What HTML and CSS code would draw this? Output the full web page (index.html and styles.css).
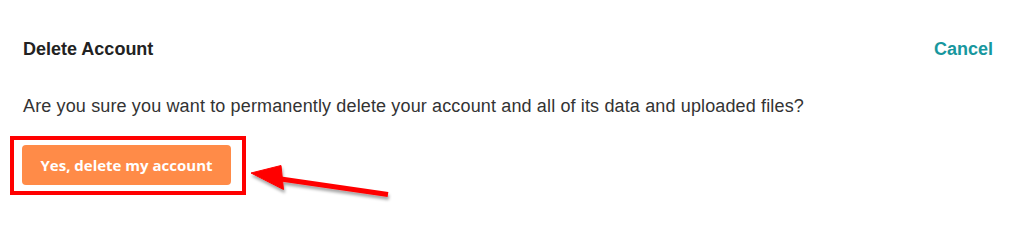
FILE: index.html
```html
<!DOCTYPE html>
<html lang="en">
<head>
  <meta charset="UTF-8" />
  <meta name="viewport" content="width=device-width, initial-scale=1.0"/>
  <title>Delete Account</title>
  <link rel="stylesheet" href="styles.css">
</head>
<body>

  <div class="panel">
    <div class="panel-head">
      <h2>Delete Account</h2>
      <a class="cancel">Cancel</a>
    </div>

    <p class="message">Are you sure you want to permanently delete your account and all of its data and uploaded files?</p>

    <!-- zvýrazněné tlačítko -->
    <div class="highlight">
      <button type="button" class="danger">Yes, delete my account</button>
    </div>
  </div>

  <!-- šipka přes obsah -->
  <svg class="arrow" width="160" height="50" viewBox="245 158 160 50">
    <defs>
      <filter id="shadow" x="-20%" y="-40%" width="140%" height="200%">
        <feDropShadow dx="1" dy="3" stdDeviation="1.5" flood-color="#000" flood-opacity="0.35"/>
      </filter>
    </defs>
    <g filter="url(#shadow)" fill="#ff0000" stroke="#ff0000">
      <line x1="274" y1="178" x2="388" y2="194.5" stroke-width="5"/>
      <polygon points="251,173 281,165.5 283.5,189.5" stroke-width="1" stroke-linejoin="round"/>
    </g>
  </svg>

</body>
</html>
```

FILE: styles.css
```css
* {
  margin: 0;
  padding: 0;
  box-sizing: border-box;
}
html, body {
  height: 100%;
  overflow: hidden;
}
body {
  background: #fff;
  font-family: 'Liberation Sans', Arial, sans-serif;
  color: #333;
  position: relative;
}

.panel {
  padding: 38px 25px 0 23px;
}

.panel-head {
  display: flex;
  justify-content: space-between;
  align-items: baseline;
}
.panel-head h2 {
  font-size: 18px;
  line-height: 22px;
  font-weight: bold;
  color: #222;
}
.cancel {
  font-size: 18px;
  line-height: 22px;
  font-weight: bold;
  color: #17979e;
  cursor: pointer;
  text-decoration: none;
}

.message {
  margin-top: 35px;
  font-size: 18px;
  line-height: 22px;
  letter-spacing: 0.14px;
  color: #333;
}

.highlight {
  margin-top: 19px;
  margin-left: -13px;
  width: fit-content;
  border: 4px solid #ff0000;
  padding: 5px 11px 6px 8px;
}

.danger {
  display: block;
  width: 209px;
  height: 40px;
  background: #ff8b48;
  color: #fff;
  border: none;
  border-radius: 4px;
  font-family: 'Open Sans', 'Noto Sans', sans-serif;
  font-size: 15px;
  font-weight: bold;
  cursor: pointer;
}

.arrow {
  position: absolute;
  left: 245px;
  top: 158px;
  overflow: visible;
}
```
